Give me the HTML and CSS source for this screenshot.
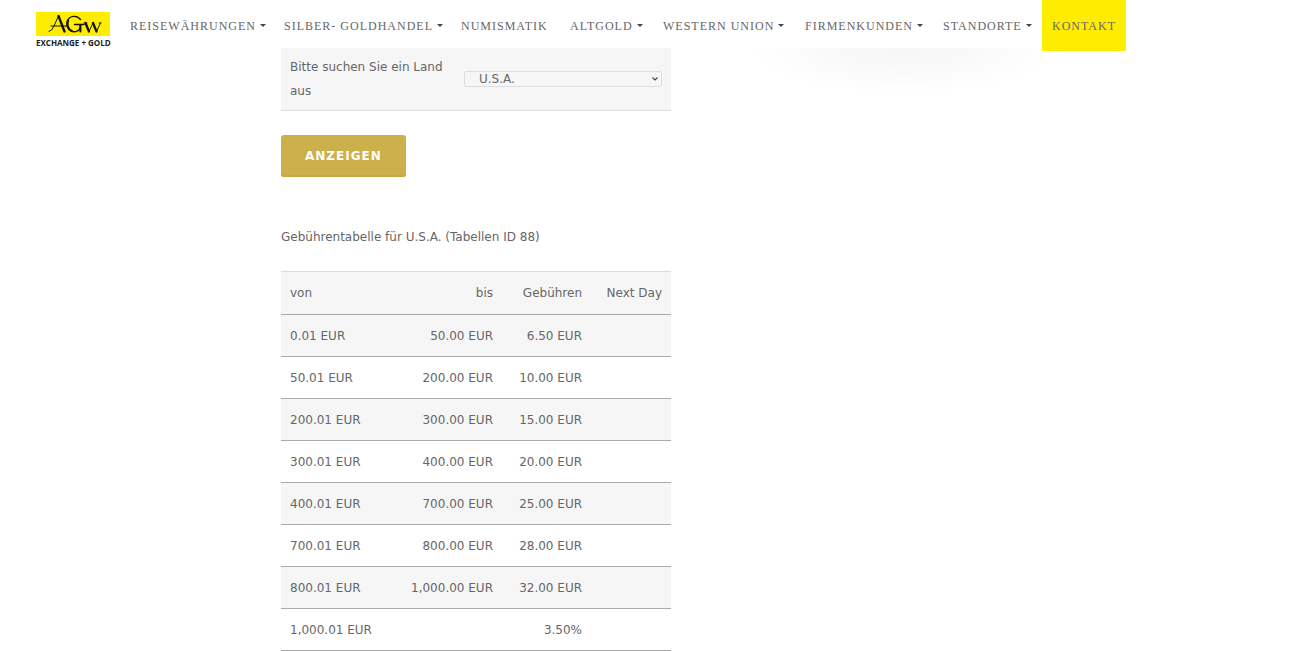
FILE: index.html
```html
<!DOCTYPE html>
<html lang="de">
<head>
<meta charset="utf-8">
<meta name="viewport" content="width=device-width, initial-scale=1">
<title>AGw Exchange + Gold</title>
<link rel="stylesheet" href="styles.css">
</head>
<body>
<header class="header">
  <a class="logo" href="#" aria-label="AGw Exchange + Gold">
    <svg width="75" height="36" viewBox="0 0 75 36" aria-hidden="true">
      <rect width="74" height="24" fill="#ffed00"/>
      <g fill="none" stroke="#16150a" stroke-linecap="round">
        <path d="M13 19.500Q16 19 18 14L22.500 4" stroke-width="1"/>
        <path d="M22.500 4L28.500 19.500" stroke-width="2.400"/>
        <path d="M15 14H31" stroke-width="1"/>
        <path d="M44.500 7.500C41 3 34 3.300 31.600 8.500C29 15 34 20.500 39.500 19.600C43 19 44.500 17 44.500 12.500M38.500 12.500H48" stroke-width="1.400"/>
        <path d="M32 8.500C30.300 13 32.500 17.500 35.500 18.800" stroke-width="2.200"/>
        <path d="M44.400 13V19.500" stroke-width="2"/>
        <path d="M49.500 11L53 19.500M57 11L60.500 19.500" stroke-width="2.300"/>
        <path d="M53 19.500L57 11M60.500 19.500L64.500 11M48 11H51M63 11H65" stroke-width="1"/>
      </g>
      <text class="logo-text" x="0" y="34">EXCHANGE + GOLD</text>
    </svg>
  </a>
  <nav class="nav">
    <a class="nav-item has-menu" href="#">Reisewährungen</a>
    <a class="nav-item has-menu" href="#">Silber- Goldhandel</a>
    <a class="nav-item" href="#">Numismatik</a>
    <a class="nav-item has-menu" href="#">Altgold</a>
    <a class="nav-item has-menu" href="#">Western Union</a>
    <a class="nav-item has-menu" href="#">Firmenkunden</a>
    <a class="nav-item has-menu" href="#">Standorte</a>
    <a class="nav-item contact" href="#">Kontakt</a>
  </nav>
</header>
<main class="main">
  <section class="content">
    <form class="form">
      <div class="field">
        <label class="field-label" for="land">Bitte suchen Sie ein Land aus</label>
        <div class="select-box">
          <select class="select" id="land"><option>U.S.A.</option></select>
          <svg class="chevron" width="6" height="4" viewBox="0 0 6 4" aria-hidden="true"><path d="M0.500 0.500L3 3L5.500 0.500" fill="none" stroke="#444" stroke-width="1.200"/></svg>
        </div>
      </div>
      <button class="button" type="button">Anzeigen</button>
    </form>
    <p class="caption">Gebührentabelle für U.S.A. (Tabellen ID 88)</p>
    <table class="fees">
      <thead>
        <tr><th class="col-from">von</th><th class="col-to">bis</th><th class="col-fee">Gebühren</th><th class="col-next">Next Day</th></tr>
      </thead>
      <tbody>
        <tr><td>0.01 EUR</td><td>50.00 EUR</td><td>6.50 EUR</td><td></td></tr>
        <tr><td>50.01 EUR</td><td>200.00 EUR</td><td>10.00 EUR</td><td></td></tr>
        <tr><td>200.01 EUR</td><td>300.00 EUR</td><td>15.00 EUR</td><td></td></tr>
        <tr><td>300.01 EUR</td><td>400.00 EUR</td><td>20.00 EUR</td><td></td></tr>
        <tr><td>400.01 EUR</td><td>700.00 EUR</td><td>25.00 EUR</td><td></td></tr>
        <tr><td>700.01 EUR</td><td>800.00 EUR</td><td>28.00 EUR</td><td></td></tr>
        <tr><td>800.01 EUR</td><td>1,000.00 EUR</td><td>32.00 EUR</td><td></td></tr>
        <tr><td>1,000.01 EUR</td><td></td><td>3.50%</td><td></td></tr>
      </tbody>
    </table>
  </section>
  <aside class="side"></aside>
</main>
</body>
</html>
```
FILE: styles.css
```css
* { box-sizing: border-box; }
body {
  margin: 0;
  background: #fff;
  color: #666;
  font: 12px/24px Verdana, "DejaVu Sans", sans-serif;
}
.header {
  display: flex;
  align-items: flex-start;
  height: 48px;
  padding-left: 36px;
  background: #fff;
}
.logo { display: block; flex: none; padding-top: 12px; line-height: 0; }
.logo-text { font: bold 8px "Open Sans", sans-serif; fill: #222; }
.nav {
  display: grid;
  grid-template-columns: 154px 177px 109px 93px 142px 138px 109px auto;
  margin-left: 9px;
}
.nav-item {
  display: flex;
  align-items: center;
  height: 51px;
  padding-left: 10px;
  color: #666;
  font: 12px/20px "Liberation Serif", serif;
  letter-spacing: 1px;
  text-transform: uppercase;
  text-decoration: none;
  white-space: nowrap;
}
.has-menu::after {
  content: "";
  margin-left: 4px;
  border: 3px solid transparent;
  border-top-color: #444;
  border-bottom: 0;
}
.contact { padding-right: 10px; background: #ffed00; position: relative; }
.main {
  display: grid;
  grid-template-columns: 390px 300px;
  column-gap: 82px;
  width: 772px;
  max-width: 100%;
  margin-left: 281px;
}
.field {
  display: grid;
  grid-template-columns: 165px 1fr;
  align-items: center;
  column-gap: 9px;
  padding: 7px 9px;
  background: #f6f6f6;
  border-bottom: 1px solid #ddd;
}
.select-box { position: relative; height: 16px; line-height: 0; }
.select {
  width: 100%;
  height: 16px;
  padding: 0 14px;
  color: #666;
  background: #f6f6f6;
  border: 1px solid #ddd;
  border-radius: 2px;
  font: inherit;
  line-height: 14px;
  appearance: none;
}
.chevron { position: absolute; right: 4px; top: 6px; pointer-events: none; }
.button {
  display: block;
  height: 42px;
  margin-top: 24px;
  padding: 0 24px;
  color: #fff;
  background: #ccb04b;
  border: 0;
  border-radius: 3px;
  box-shadow: inset 0 -2px #c5a947;
  font: bold 12px/20px Verdana, "DejaVu Sans", sans-serif;
  letter-spacing: 1px;
  text-transform: uppercase;
}
.caption { margin: 48px 0 22px; }
.fees {
  width: 100%;
  table-layout: fixed;
  border-collapse: collapse;
  border-top: 1px solid #ddd;
}
.fees th, .fees td {
  height: 42px;
  padding: 0 9px;
  border-bottom: 1px solid #aaa;
  font-weight: 400;
  text-align: right;
}
.fees th { height: 43px; }
.fees th:first-child, .fees td:first-child { text-align: left; }
.fees thead tr, .fees tbody tr:nth-child(odd) { background: #f6f6f6; }
.col-from { width: 110px; }
.col-to { width: 111px; }
.col-fee { width: 89px; }
.col-next { width: 80px; }
.side {
  height: 50px;
  background: radial-gradient(ellipse 150px 46px at 50% 0, #f7f7f7, #f8f8f8 35%, #fff);
}
```
